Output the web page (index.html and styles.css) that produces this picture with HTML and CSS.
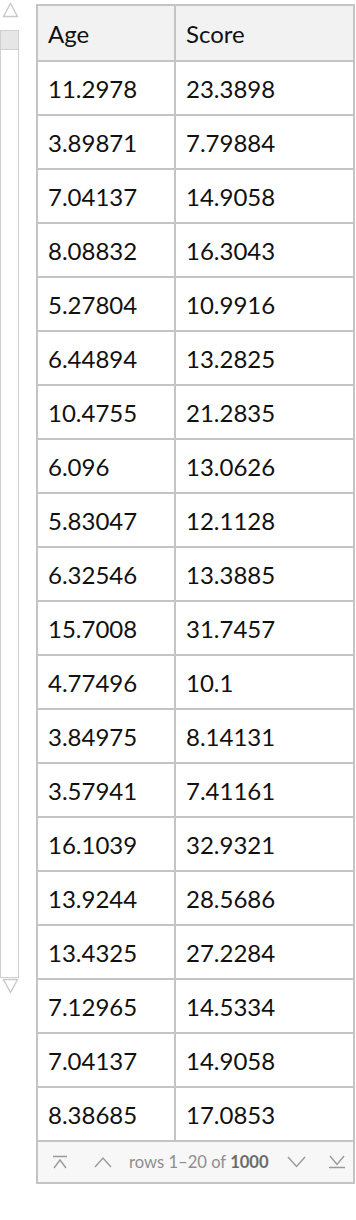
FILE: index.html
```html
<!DOCTYPE html>
<html>
<head>
<meta charset="utf-8">
<link rel="stylesheet" href="styles.css">
</head>
<body>
<div class="wrap">
  <div class="scroller">
    <svg class="tri" width="17" height="16" viewBox="0 0 17 16"><polygon points="8.5,1.5 15.5,14.5 1.5,14.5" fill="none" stroke="#c9c9c9" stroke-width="1.4"/></svg>
    <div class="track"><div class="thumb"></div></div>
    <svg class="tri down" width="17" height="16" viewBox="0 0 17 16"><polygon points="1.5,1.5 15.5,1.5 8.5,14.5" fill="none" stroke="#c9c9c9" stroke-width="1.4"/></svg>
  </div>
  <div class="grid">
    <div class="cell head">Age</div><div class="cell head">Score</div>
    <div class="cell">11.2978</div><div class="cell">23.3898</div>
    <div class="cell">3.89871</div><div class="cell">7.79884</div>
    <div class="cell">7.04137</div><div class="cell">14.9058</div>
    <div class="cell">8.08832</div><div class="cell">16.3043</div>
    <div class="cell">5.27804</div><div class="cell">10.9916</div>
    <div class="cell">6.44894</div><div class="cell">13.2825</div>
    <div class="cell">10.4755</div><div class="cell">21.2835</div>
    <div class="cell">6.096</div><div class="cell">13.0626</div>
    <div class="cell">5.83047</div><div class="cell">12.1128</div>
    <div class="cell">6.32546</div><div class="cell">13.3885</div>
    <div class="cell">15.7008</div><div class="cell">31.7457</div>
    <div class="cell">4.77496</div><div class="cell">10.1</div>
    <div class="cell">3.84975</div><div class="cell">8.14131</div>
    <div class="cell">3.57941</div><div class="cell">7.41161</div>
    <div class="cell">16.1039</div><div class="cell">32.9321</div>
    <div class="cell">13.9244</div><div class="cell">28.5686</div>
    <div class="cell">13.4325</div><div class="cell">27.2284</div>
    <div class="cell">7.12965</div><div class="cell">14.5334</div>
    <div class="cell">7.04137</div><div class="cell">14.9058</div>
    <div class="cell">8.38685</div><div class="cell">17.0853</div>
    <div class="foot">
      <svg class="ic first" width="16" height="14" viewBox="0 0 16 14"><path d="M1 1.5H15M2 13L8 5L14 13" fill="none" stroke="#9a9a9a" stroke-width="1.4"/></svg>
      <svg class="ic prev" width="18" height="12" viewBox="0 0 18 12"><path d="M1 11L9 2L17 11" fill="none" stroke="#9a9a9a" stroke-width="1.4"/></svg>
      <span class="info">rows 1–20 of <b>1000</b></span>
      <svg class="ic next" width="19" height="12" viewBox="0 0 19 12"><path d="M1 1L9.5 10.5L18 1" fill="none" stroke="#9a9a9a" stroke-width="1.4"/></svg>
      <svg class="ic last" width="18" height="14" viewBox="0 0 18 14"><path d="M2 1L9 9.5L16 1M1 12.5H17" fill="none" stroke="#9a9a9a" stroke-width="1.4"/></svg>
    </div>
  </div>
</div>
</body>
</html>
```
FILE: styles.css
```css
html, body {
  margin: 0;
  padding: 0;
  background: #ffffff;
}
body {
  font-family: "Lato", "Liberation Sans", sans-serif;
  color: #111;
}
.wrap {
  display: flex;
  align-items: flex-start;
  padding-top: 2px;
}
.scroller {
  width: 19px;
  display: flex;
  flex-direction: column;
  align-items: center;
}
.tri {
  display: block;
  margin-left: 2px;
}
.track {
  margin-top: 12px;
  width: 17px;
  height: 946px;
  border: 1px solid #cfcfcf;
  background: #fff;
}
.thumb {
  height: 18px;
  background: #e6e6e6;
  border-bottom: 1px solid #cfcfcf;
}
.grid {
  margin-left: 17px;
  margin-top: 2px;
  display: grid;
  grid-template-columns: 136px 177px;
  gap: 2px;
  border: 2px solid #c4c4c4;
  background: #c4c4c4;
  width: 315px;
}
.cell {
  background: #fff;
  height: 52px;
  display: flex;
  align-items: center;
  padding-left: 10px;
  font-size: 24px;
  color: #111;
}
.cell.head {
  height: 54px;
  background: #f2f2f2;
}
.foot {
  grid-column: 1 / span 2;
  background: #f7f7f7;
  height: 40px;
  display: flex;
  align-items: center;
  padding-left: 14px;
}
.ic {
  display: block;
}
.prev {
  margin-left: 26px;
}
.info {
  margin-left: 17px;
  font-size: 16.6px;
  color: #8e8e8e;
  white-space: nowrap;
}
.info b {
  color: #6a6a6a;
  font-weight: 700;
}
.next {
  margin-left: 18px;
}
.last {
  margin-left: 22px;
}
```
